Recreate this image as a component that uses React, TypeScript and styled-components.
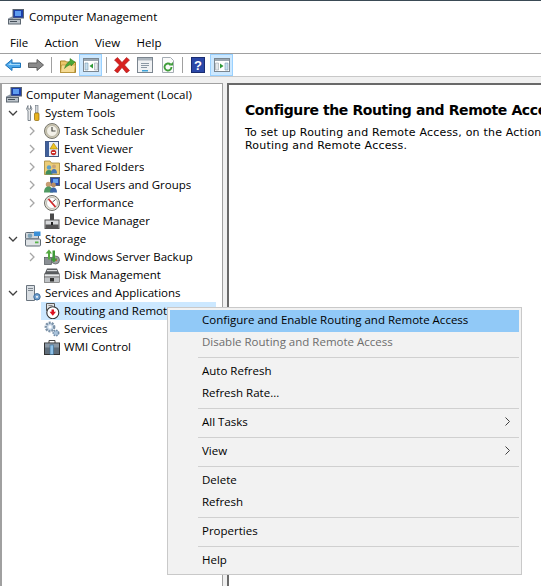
import * as React from "react";
import styled, { createGlobalStyle } from "styled-components";

const GlobalStyle = createGlobalStyle`
  html, body { margin: 0; padding: 0; background: #fff; }
  body { font-family: "Open Sans", "Noto Sans", sans-serif; font-size: 11.5px; color: #000; }
`;

//Icons, all on a 16 grid
const icons: Record<string, React.ReactNode> = {
  computer: (
    <>
      <rect x="5" y="0.500" width="10.500" height="8.500" fill="#1d3fa8" stroke="#5a6470" />
      <rect x="7" y="2" width="6" height="5" fill="#5f9df0" />
      <path d="M0 9.500L5 7v4H0z" fill="#8d97a3" />
      <rect x="0.500" y="10.500" width="12" height="4.500" fill="#bcc3ca" stroke="#5c6670" />
      <path d="M2 12.500h7" stroke="#46505a" />
    </>
  ),
  tools: (
    <>
      <path d="M3 0.500L1.500 4 3 6v9.500h2.500V6L7 4 5.500 0.500v3.500H3z" fill="#e4e6e8" stroke="#66707a" strokeWidth=".8" />
      <rect x="10.500" y="0.500" width="2.500" height="7.500" fill="#d4d8dc" stroke="#6c7680" strokeWidth=".6" />
      <rect x="9.500" y="8" width="4.500" height="7.500" rx="1" fill="#e8b31e" stroke="#8a6508" strokeWidth=".7" />
    </>
  ),
  clock: (
    <>
      <circle cx="8" cy="8" r="7.500" fill="#cfc9b4" stroke="#77776e" />
      <circle cx="8" cy="8" r="5.500" fill="#f3f1e8" stroke="#a9a695" strokeWidth=".7" />
      <path d="M8 4V8h3.500" fill="none" stroke="#4a4a44" strokeWidth="1.200" />
    </>
  ),
  log: (
    <>
      <rect x="1.500" y="0.500" width="13" height="15" fill="#e8eef8" stroke="#41557e" />
      <path d="M1.500 0.500h3.500v15H1.500z" fill="#3f5f9a" />
      <path d="M9.500 2L13.500 8H6z" fill="#f0c420" stroke="#8a6c00" strokeWidth=".5" />
      <circle cx="9.500" cy="11.500" r="2.700" fill="#c9302c" />
      <path d="M8 11.500h3" stroke="#fff" />
    </>
  ),
  shared: (
    <>
      <path d="M0.500 2h5.500l1.500 2H15.500v11.500H0.500z" fill="#eccd78" stroke="#a58735" strokeWidth=".8" />
      <circle cx="5" cy="8.500" r="2.200" fill="#5da0c9" />
      <path d="M1.500 15.500c0-3 1-4.500 3.500-4.500s3.500 1.500 3.500 4.500z" fill="#3f8d5c" />
      <circle cx="10" cy="7.500" r="2" fill="#c9a47a" />
      <path d="M7 14.500c0-3 1-4.500 3-4.500s3 1.500 3 4.500z" fill="#4677b5" />
    </>
  ),
  users: (
    <>
      <rect x="6.500" y="0.500" width="9" height="8" fill="#2a4db0" stroke="#59636e" />
      <rect x="9" y="2" width="5" height="4" fill="#67a3ee" />
      <circle cx="4.500" cy="7.500" r="2.700" fill="#c99e74" />
      <path d="M0 15.500c0-4 2-6 4.500-6S9 11.500 9 15.500z" fill="#4f9a62" />
      <circle cx="9.500" cy="8" r="2.400" fill="#b98d63" />
      <path d="M6 15.500c0-3 1-5 3.500-5s3.500 2 3.500 5z" fill="#3b66a8" />
    </>
  ),
  perf: (
    <>
      <circle cx="8" cy="8" r="7.500" fill="#e6e3d8" stroke="#6c6c66" />
      <circle cx="8" cy="8" r="5.500" fill="#fff" stroke="#9b9b92" strokeWidth=".6" />
      <path d="M4.500 4l7 8" stroke="#d0282a" strokeWidth="1.800" />
      <path d="M11.500 4.500L8.500 7" stroke="#444" />
    </>
  ),
  device: (
    <>
      <rect x="6" y="0.500" width="4" height="6.500" fill="#4a4a4a" />
      <rect x="1" y="7" width="14" height="8.500" fill="#d8dadc" stroke="#555" />
      <rect x="1.500" y="11.500" width="13" height="4" fill="#555" />
      <rect x="7" y="9" width="2" height="3" fill="#222" />
    </>
  ),
  storage: (
    <>
      <rect x="0.500" y="1.500" width="13" height="6.500" rx="1" fill="#cfd5da" stroke="#5f6a74" />
      <rect x="0.500" y="8" width="15" height="7" rx="1" fill="#dfe3e6" stroke="#5f6a74" />
      <circle cx="5" cy="4.800" r="2.300" fill="#7ea3b8" />
      <rect x="9" y="0.500" width="6.500" height="4.500" fill="#3a8fd6" />
      <rect x="10" y="10.500" width="3.500" height="1.800" fill="#59b34a" />
    </>
  ),
  backup: (
    <>
      <rect x="0.500" y="8.500" width="7" height="7" fill="#8a8f94" stroke="#4d5358" strokeWidth=".7" />
      <circle cx="11.500" cy="11" r="4" fill="#9c9fa3" stroke="#55595d" strokeWidth=".7" />
      <circle cx="12" cy="11" r="1.200" fill="#c8683a" />
      <path d="M1.500 4.500L5 0.500l3 4H6v6H4v-6z" fill="#53a93f" />
      <path d="M8.500 1.500h2.500v8h2.500L9.800 13.500 6.500 9.500h2z" fill="#3f9a3a" />
    </>
  ),
  disk: (
    <>
      <path d="M3 1.500h10l2.500 5.500H0.500z" fill="#5a5d60" />
      <rect x="3" y="3" width="10" height="1.200" fill="#d8dadc" />
      <rect x="0.500" y="7" width="15" height="3" fill="#e6e8ea" stroke="#555" strokeWidth=".6" />
      <rect x="0.500" y="10" width="15" height="5.500" fill="#bfc2c5" stroke="#555" strokeWidth=".6" />
      <rect x="6" y="11" width="4" height="3.500" fill="#333" />
    </>
  ),
  server: (
    <>
      <path d="M1.500 0.500h8v15h-8z" fill="#d9dee3" stroke="#6a747e" />
      <path d="M3 3.500h5M3 5.500h5" stroke="#7d8790" />
      <circle cx="12" cy="11.800" r="3.200" fill="#6f9fce" stroke="#3d6a99" />
      <circle cx="12" cy="11.800" r="1.100" fill="#e9f1f8" />
    </>
  ),
  routing: (
    <>
      <path d="M2.500 0.500h8v7h-8z" fill="#dfe2e5" stroke="#555" />
      <path d="M4.500 2.500h4" stroke="#888" />
      <circle cx="8.800" cy="9.700" r="6" fill="#fff" stroke="#333" strokeWidth="1.100" />
      <path d="M5.500 8.700h2V6.500h2.500v2.200h2l-3.200 4z" fill="#dc1020" />
    </>
  ),
  services: (
    <>
      <circle cx="6" cy="6" r="4.200" fill="#c6d6e6" stroke="#7d93a8" strokeWidth="2.400" strokeDasharray="2 1" />
      <circle cx="6" cy="6" r="1.700" fill="#fff" />
      <circle cx="12" cy="12" r="2.700" fill="#aac3db" stroke="#6f8aa5" strokeWidth="1.600" strokeDasharray="1.500 1" />
    </>
  ),
  wmi: (
    <>
      <path d="M5 4V1.500h6V4" fill="none" stroke="#444" />
      <rect x="0.500" y="4" width="15" height="11.500" fill="#5f6d7a" stroke="#333" />
      <rect x="1" y="4.500" width="14" height="4" fill="#8997a4" />
      <rect x="6" y="6" width="3.500" height="9.500" fill="#8ec1e8" stroke="#36698f" strokeWidth=".6" />
    </>
  ),
  back: (
    <>
      <path d="M0.500 8L7 2.500V6h8.500v4.500H7V13.500z" fill="#4aa5ea" stroke="#1d73b8" />
      <path d="M3 8l3-2.500V7h9v1H3z" fill="#a6dbfa" />
    </>
  ),
  forward: <path d="M15.500 8L9 2.500V6H0.500v4.500H9V13.500z" fill="#8a8a8a" stroke="#5f5f5f" />,
  folderUp: (
    <>
      <path d="M0.500 4h5l1 1h9v10.500H0.500z" fill="#ecc66b" stroke="#a98628" />
      <path d="M1.500 8h14l-1 7.500H0.500z" fill="#f5da92" stroke="#a98628" strokeWidth=".6" />
      <path d="M4.500 11.500c1-3.500 3-6 5.500-7.500V1.500l5 3.500-4 4V7c-2 1-4.500 2.500-6.500 4.500z" fill="#49a838" stroke="#2e7a22" strokeWidth=".5" />
    </>
  ),
  paneLeft: (
    <>
      <rect x="0.500" y="1.500" width="15" height="13" fill="#fff" stroke="#7a8690" />
      <rect x="1" y="2" width="14" height="2" fill="#9aa6b0" />
      <path d="M2 6h3v7H2z" fill="#c6dff0" stroke="#7a9ab0" strokeWidth=".6" />
      <path d="M10 6.500v5L6.500 9z" fill="#2f9a38" />
      <path d="M11.500 6h3v7h-3z" fill="#e4e8ec" stroke="#9aa6b0" strokeWidth=".6" />
    </>
  ),
  paneRight: (
    <>
      <rect x="0.500" y="1.500" width="15" height="13" fill="#fff" stroke="#7a8690" />
      <rect x="1" y="2" width="14" height="2" fill="#9aa6b0" />
      <path d="M1.500 6h3v7h-3z" fill="#e4e8ec" stroke="#9aa6b0" strokeWidth=".6" />
      <path d="M6 6.500v5L9.500 9z" fill="#2f9a38" />
      <path d="M11 6h3v7h-3z" fill="#c6dff0" stroke="#7a9ab0" strokeWidth=".6" />
    </>
  ),
  remove: <path d="M0.500 3L3.500 0.500 8 5.500 12.500 0.500 15.500 3 10.500 8l5 5.500-3 2.500L8 10.500 3.500 16l-3-2.500L5.500 8z" fill="#d8211f" stroke="#a81815" strokeWidth=".6" />,
  props: (
    <>
      <rect x="0.500" y="0.500" width="15" height="15" fill="#f0f2f4" stroke="#7b858f" />
      <rect x="1" y="1" width="14" height="2.500" fill="#adb6be" />
      <path d="M4 6.500h8M4 8.500h8M4 10.500h6" stroke="#8b98a4" />
      <rect x="5" y="13" width="6" height="1.500" fill="#3fa3d8" />
    </>
  ),
  refresh: (
    <>
      <path d="M2.500 0.500h8l3 3v12h-11z" fill="#fafafa" stroke="#a5adb4" />
      <path d="M11.500 10a3.500 3.500 0 1 1-1-2.500" fill="none" stroke="#3f9d3a" strokeWidth="1.900" />
      <path d="M9 8.500h4V5z" fill="#3f9d3a" />
    </>
  ),
  help: (
    <>
      <rect x="1.500" y="0.500" width="13" height="15" fill="#2b48a8" stroke="#1a2c70" />
      <text x="8" y="13" textAnchor="middle" fontSize="13" fontWeight="700" fill="#fff" fontFamily="Liberation Sans, sans-serif">?</text>
    </>
  ),
};

const Icon: React.FC<{ name: string }> = ({ name }) => (
  <IconSvg viewBox="0 0 16 16" aria-hidden="true">
    {icons[name]}
  </IconSvg>
);

interface TreeItem {
  label: string;
  icon: string;
  level: number;
  caret?: "open" | "closed";
  selected?: boolean;
}

const treeItems: TreeItem[] = [
  { label: "Computer Management (Local)", icon: "computer", level: 0 },
  { label: "System Tools", icon: "tools", level: 1, caret: "open" },
  { label: "Task Scheduler", icon: "clock", level: 2, caret: "closed" },
  { label: "Event Viewer", icon: "log", level: 2, caret: "closed" },
  { label: "Shared Folders", icon: "shared", level: 2, caret: "closed" },
  { label: "Local Users and Groups", icon: "users", level: 2, caret: "closed" },
  { label: "Performance", icon: "perf", level: 2, caret: "closed" },
  { label: "Device Manager", icon: "device", level: 2 },
  { label: "Storage", icon: "storage", level: 1, caret: "open" },
  { label: "Windows Server Backup", icon: "backup", level: 2, caret: "closed" },
  { label: "Disk Management", icon: "disk", level: 2 },
  { label: "Services and Applications", icon: "server", level: 1, caret: "open" },
  { label: "Routing and Remote Access", icon: "routing", level: 2, selected: true },
  { label: "Services", icon: "services", level: 2 },
  { label: "WMI Control", icon: "wmi", level: 2 },
];

type ToolEntry = { icon: string; active?: boolean } | { gap: number };

const toolEntries: ToolEntry[] = [
  { icon: "back" },
  { icon: "forward" },
  { gap: 9 },
  { icon: "folderUp" },
  { icon: "paneLeft", active: true },
  { gap: 8 },
  { icon: "remove" },
  { icon: "props" },
  { icon: "refresh" },
  { gap: 7 },
  { icon: "help" },
  { gap: 1 },
  { icon: "paneRight", active: true },
];

type MenuEntry = { label: string; disabled?: boolean; hot?: boolean; more?: boolean } | "sep";

const menuEntries: MenuEntry[] = [
  { label: "Configure and Enable Routing and Remote Access", hot: true },
  { label: "Disable Routing and Remote Access", disabled: true },
  "sep",
  { label: "Auto Refresh" },
  { label: "Refresh Rate..." },
  "sep",
  { label: "All Tasks", more: true },
  "sep",
  { label: "View", more: true },
  "sep",
  { label: "Delete" },
  { label: "Refresh" },
  "sep",
  { label: "Properties" },
  "sep",
  { label: "Help" },
];

const App: React.FC = () => {
  return (
    <Window>
      <GlobalStyle />
      <TitleBar>
        <Icon name="computer" />
        <span>Computer Management</span>
      </TitleBar>
      <MenuBar>
        {["File", "Action", "View", "Help"].map((m) => (
          <span key={m}>{m}</span>
        ))}
      </MenuBar>
      <Toolbar>
        {toolEntries.map((t, i) =>
          "gap" in t ? (
            <ToolSep key={i} $width={t.gap} />
          ) : (
            <ToolButton key={i} $active={t.active}>
              <Icon name={t.icon} />
            </ToolButton>
          )
        )}
      </Toolbar>
      <Panes>
        <TreePane>
          {treeItems.map((item) => (
            <TreeRow key={item.label} $level={item.level}>
              {item.level > 0 && (
                <Caret>
                  {item.caret && (
                    <svg width="10" height="10" viewBox="0 0 10 10">
                      {item.caret === "open" ? (
                        <path d="M1 3l4 4 4-4" fill="none" stroke="#404040" strokeWidth="1.300" />
                      ) : (
                        <path d="M3 1l4 4-4 4" fill="none" stroke="#a6a6a6" strokeWidth="1.300" />
                      )}
                    </svg>
                  )}
                </Caret>
              )}
              <TreeEntry $selected={item.selected}>
                <Icon name={item.icon} />
                <TreeLabel $selected={item.selected}>{item.label}</TreeLabel>
              </TreeEntry>
            </TreeRow>
          ))}
        </TreePane>
        <ContentPane>
          <Heading>Configure the Routing and Remote Access</Heading>
          <Body>
            To set up Routing and Remote Access, on the Action menu, click Configure and Enable
            <br />
            Routing and Remote Access.
          </Body>
        </ContentPane>
      </Panes>
      <ContextMenu>
        {menuEntries.map((e, i) =>
          e === "sep" ? (
            <MenuSep key={i} />
          ) : (
            <MenuItem key={i} $hot={e.hot} $disabled={e.disabled}>
              {e.label}
              {e.more && (
                <svg width="5" height="9" viewBox="0 0 5 9">
                  <path d="M.5 .5l4 4-4 4" fill="none" stroke="#404040" />
                </svg>
              )}
            </MenuItem>
          )
        )}
      </ContextMenu>
    </Window>
  );
};

export default App;

const IconSvg = styled.svg`
  width: 16px;
  height: 16px;
  flex: none;
  display: block;
`;

const Window = styled.div`
  position: relative;
  width: 541px;
  height: 586px;
  overflow: hidden;
  display: flex;
  flex-direction: column;
  background: #fff;
  border-top: 1px solid #3a4a55;
  box-sizing: border-box;
`;

const TitleBar = styled.div`
  height: 31px;
  display: flex;
  align-items: center;
  gap: 5px;
  padding-left: 8px;
`;

const MenuBar = styled.div`
  height: 22px;
  box-sizing: border-box;
  display: flex;
  align-items: center;
  padding: 0 0 1px 10px;
  gap: 16.500px;
  border-bottom: 1px solid #a0a0a0;
`;

const Toolbar = styled.div`
  height: 22px;
  display: flex;
  align-items: stretch;
  padding-left: 1px;
  background: #fff;
  border-bottom: 1px solid #c8c8c8;
`;

const ToolButton = styled.div<{ $active?: boolean }>`
  width: 23px;
  box-sizing: border-box;
  display: flex;
  align-items: center;
  justify-content: center;
  background: ${({ $active }) => ($active ? "#cce8ff" : "transparent")};
  border: 1px solid ${({ $active }) => ($active ? "#99d1ff" : "transparent")};
`;

const ToolSep = styled.div<{ $width: number }>`
  width: ${({ $width }) => $width}px;
  display: flex;
  justify-content: center;
  padding: 3px 0;
  box-sizing: border-box;
  &::after {
    content: "";
    width: ${({ $width }) => ($width > 1 ? "1px" : "0")};
    background: #a0a0a0;
  }
`;

const Panes = styled.div`
  flex: 1;
  display: flex;
  min-height: 0;
  padding-top: 6px;
  background: #f0f0f0;
`;

const TreePane = styled.div`
  width: 223px;
  box-sizing: border-box;
  background: #fff;
  border-left: 2px solid #a0a0a0;
  border-top: 1px solid #a0a0a0;
  border-right: 1px solid #a0a0a0;
  padding-top: 2px;
`;

const TreeRow = styled.div<{ $level: number }>`
  height: 18px;
  display: flex;
  align-items: center;
  padding-left: ${({ $level }) => ($level === 0 ? 4 : $level === 1 ? 3 : 22)}px;
`;

const Caret = styled.div`
  width: 20px;
  height: 18px;
  flex: none;
  display: flex;
  align-items: center;
  padding-left: 3px;
  box-sizing: border-box;
`;

const TreeEntry = styled.div<{ $selected?: boolean }>`
  display: flex;
  align-items: center;
  gap: 4px;
  height: 18px;
  margin-left: ${({ $selected }) => ($selected ? "-3px" : "0")};
  padding-left: ${({ $selected }) => ($selected ? "3px" : "0")};
  width: ${({ $selected }) => ($selected ? "175px" : "auto")};
  box-sizing: border-box;
  overflow: hidden;
  background: ${({ $selected }) => ($selected ? "#cce8ff" : "transparent")};
`;

const TreeLabel = styled.span<{ $selected?: boolean }>`
  white-space: nowrap;
  padding-bottom: 2px;
  ${({ $selected }) => ($selected ? "max-width: 104px; overflow: hidden;" : "")}
`;

const ContentPane = styled.div`
  flex: 1;
  min-width: 0;
  margin-left: 4px;
  background: #fff;
  border-left: 2px solid #696969;
  border-top: 2px solid #696969;
  padding: 15px 0 0 16px;
  white-space: nowrap;
  font-family: "DejaVu Sans", Verdana, sans-serif;
`;

const Heading = styled.div`
  font-weight: 700;
  font-size: 14px;
  letter-spacing: -0.4px;
  line-height: 20px;
`;

const Body = styled.div`
  margin-top: 6px;
  font-size: 11px;
  letter-spacing: 0.2px;
  line-height: 13px;
`;

const ContextMenu = styled.div`
  position: absolute;
  left: 167px;
  top: 306px;
  width: 355px;
  box-sizing: border-box;
  padding: 2px;
  background: #f2f2f2;
  border: 1px solid #c9c9c9;
`;

const MenuItem = styled.div<{ $hot?: boolean; $disabled?: boolean }>`
  height: 22px;
  box-sizing: border-box;
  display: flex;
  align-items: center;
  justify-content: space-between;
  padding: 0 9px 4px 32px;
  background: ${({ $hot }) => ($hot ? "#91c9f7" : "transparent")};
  color: ${({ $disabled }) => ($disabled ? "#6d6d6d" : "#000")};
`;

const MenuSep = styled.div`
  height: 1px;
  margin: 3px 0 3px 28px;
  background: #d0d0d0;
`;
